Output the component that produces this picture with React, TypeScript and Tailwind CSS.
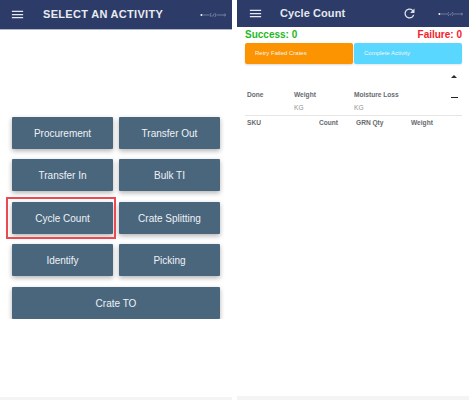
import { MdMenu, MdRefresh } from "react-icons/md";

const sans = "font-['Liberation_Sans',Arial,sans-serif]";

// little line + circle thing on the right of the header
const Signal = ({ className }: { className: string }) => (
  <svg viewBox="0 0 28 6" className={className} fill="none" stroke="#c3c9da" strokeWidth="0.5">
    <circle cx="1.5" cy="3" r="1" fill="#fff" stroke="none" />
    <path d="M2 3h8M18 3h7" />
    <path d="M12 0.8a3 3 0 0 0 0 4.4M16 0.8a3 3 0 0 1 0 4.4M12.8 3.4l1 1 1.4-2.6" />
    <circle cx="26.5" cy="3" r="1" />
  </svg>
);

const ActivityButton = ({ label, className = "" }: { label: string; className?: string }) => (
  <div
    className={`flex h-[32px] items-center justify-center rounded-[1px] bg-[#4a667d] pt-[1px] text-[10px] text-[#eef2f5] shadow-[0_2px_5px_rgba(0,0,0,0.3)] ${className}`}
  >
    {label}
  </div>
);

const Activities = () => (
  <div className="flex h-full w-[232px] shrink-0 flex-col">
    <div className="flex h-[30px] shrink-0 items-center border-b border-[#aeb6c8] bg-[#2c3b68] pl-[10px] pr-[6px] text-white">
      <MdMenu size={15} className="text-[#e6e8ef]" />
      <div className={`ml-[18px] flex-1 text-[11px] font-bold tracking-[0.3px] text-[#e9ebf1] ${sans}`}>SELECT AN ACTIVITY</div>
      <Signal className="h-[6px] w-[26px]" />
    </div>
    <div className={`h-[289px] shrink-0 overflow-hidden px-[12px] pt-[87px] ${sans}`}>
      <div className="grid grid-cols-2 gap-x-[6px] gap-y-[10.4px]">
        <ActivityButton label="Procurement" />
        <ActivityButton label="Transfer Out" />
        <ActivityButton label="Transfer In" />
        <ActivityButton label="Bulk TI" />
        <div className="relative">
          <ActivityButton label="Cycle Count" />
          <div className="absolute -bottom-[5px] -left-[6px] -right-[3px] -top-[5px] border-2 border-[#ea4a50]" />
        </div>
        <ActivityButton label="Crate Splitting" />
        <ActivityButton label="Identify" />
        <ActivityButton label="Picking" />
        <ActivityButton label="Crate TO" className="col-span-2" />
      </div>
    </div>
    <div className="flex-1" />
    <div className="h-[3px] shrink-0 bg-[#f4f4f4]" />
  </div>
);

const CycleCount = () => (
  <div className="flex h-full w-[232px] shrink-0 flex-col">
    <div className="flex h-[27px] shrink-0 items-center bg-[#2c3b68] pl-[11px] pr-[5px] text-white">
      <MdMenu size={15} className="text-[#e6e8ef]" />
      <div className={`ml-[17px] flex-1 text-[11px] font-bold tracking-[0.1px] text-[#e4e7ee] ${sans}`}>Cycle Count</div>
      <MdRefresh size={15} className="mr-[21px] text-[#dfe3ec]" />
      <Signal className="mr-[1px] h-[6px] w-[25px]" />
    </div>
    <div className={`flex justify-between pl-[8px] pr-[7px] pt-[1px] text-[10px] font-bold leading-[13px] ${sans}`}>
      <span className="text-[#1fb81f]">Success: 0</span>
      <span className="text-[#f5212b]">Failure: 0</span>
    </div>
    <div className={`ml-[8px] mr-[7px] mt-[2px] flex h-[21px] gap-[1px] text-[6px] text-[#f4f4f4] ${sans}`}>
      <div className="flex flex-1 items-center rounded-[2px] bg-[#fc9300] pl-[10px] shadow-[0_1px_2px_rgba(0,0,0,0.15)]">Retry Failed Crates</div>
      <div className="flex flex-1 items-center rounded-[2px] bg-[#5ad7ff] pl-[10px] shadow-[0_1px_2px_rgba(0,0,0,0.1)]">Complete Activity</div>
    </div>
    <div className="mt-[11px] flex justify-end pr-[12px]">
      <div className="h-0 w-0 border-x-[3px] border-b-[3px] border-x-transparent border-b-[#2b2b2b]" />
    </div>
    <div className={`relative ml-[8px] mr-[7px] mt-[10px] border-b border-[#e5e5e5] pb-[1px] text-[6.6px] font-bold leading-[13px] text-[#666b70] ${sans}`}>
      <div className="grid grid-cols-[47px_60px_1fr] pl-[2px]">
        <span>Done</span>
        <span>Weight</span>
        <span>Moisture Loss</span>
        <span />
        <span className="font-normal text-[#8f9398]">KG</span>
        <span className="font-normal text-[#8f9398]">KG</span>
      </div>
      <div className="absolute right-[4px] top-[9px] h-[1px] w-[7px] bg-[#222]" />
    </div>
    <div className={`ml-[8px] mr-[7px] grid grid-cols-[72px_37px_55px_1fr] pl-[2px] text-[6.6px] font-bold leading-[13px] text-[#666b70] ${sans}`}>
      <span>SKU</span>
      <span>Count</span>
      <span>GRN Qty</span>
      <span>Weight</span>
    </div>
    <div className="flex-1" />
    <div className="h-[4px] shrink-0 bg-[#f4f4f4]" />
  </div>
);

export default function App() {
  return (
    <div className="flex h-[400px] w-[469px] justify-between overflow-hidden bg-white">
      <Activities />
      <CycleCount />
    </div>
  );
}
